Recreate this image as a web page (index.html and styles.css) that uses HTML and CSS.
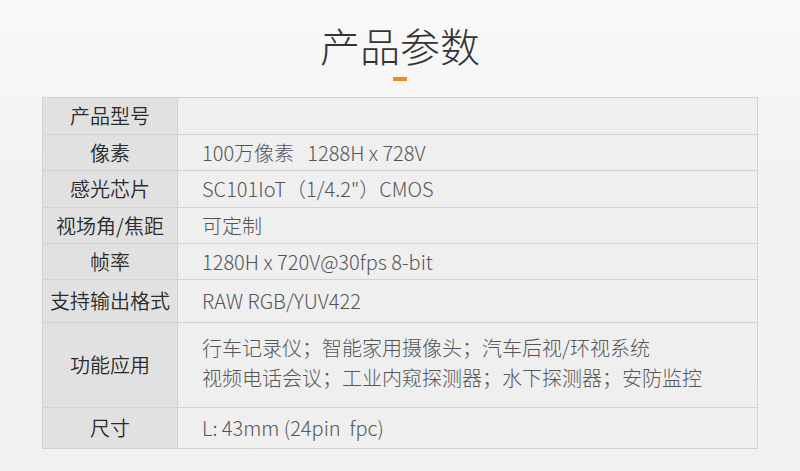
FILE: index.html
```html
<!DOCTYPE html>
<html lang="zh-CN">
  <head>
    <meta charset="UTF-8" />
    <meta name="viewport" content="width=device-width, initial-scale=1.0">
    <title>产品参数</title>
    <link rel="stylesheet" href="styles.css">
  </head>
  <body>
    <div class="main">
      <h2 class="title">产品参数</h2>
      <div class="bar"></div>

      <table class="params">
        <tr class="r1">
          <th>产品型号</th>
          <td></td>
        </tr>
        <tr class="r2">
          <th>像素</th>
          <td>100万像素&nbsp;&nbsp;&nbsp;1288H x 728V</td>
        </tr>
        <tr class="r3">
          <th>感光芯片</th>
          <td>SC101IoT（1/4.2"）CMOS</td>
        </tr>
        <tr class="r4">
          <th>视场角/焦距</th>
          <td>可定制</td>
        </tr>
        <tr class="r5">
          <th>帧率</th>
          <td>1280H x 720V@30fps 8-bit</td>
        </tr>
        <tr class="r6">
          <th>支持输出格式</th>
          <td>RAW RGB/YUV422</td>
        </tr>
        <tr class="r7">
          <th>功能应用</th>
          <td>行车记录仪；智能家用摄像头；汽车后视/环视系统<br />视频电话会议；工业内窥探测器；水下探测器；安防监控</td>
        </tr>
        <tr class="r8">
          <th>尺寸</th>
          <td>L: 43mm (24pin&nbsp;&nbsp;fpc)</td>
        </tr>
      </table>
    </div>
  </body>
</html>
```

FILE: styles.css
```css
body, html {
  margin: 0;
  height: 100%;
}

body {
  background: linear-gradient(to bottom, #f9f9f9 0%, #f2f2f2 40%, #f1f1f1 100%);
  font-family: "Noto Sans CJK SC", "Noto Sans", sans-serif;
  color: #333;
}

.main {
  padding-top: 25px;
  display: flex;
  flex-direction: column;
  align-items: center;
}

.title {
  margin: 0;
  font-size: 40px;
  line-height: 40px;
  font-weight: 300;
  color: #333;
}

.bar {
  width: 14px;
  height: 4px;
  margin-top: 12px;
  background: #f38a1d;
}

.params {
  margin-top: 16px;
  width: 716px;
  border-collapse: collapse;
  font-size: 20px;
}

.params th,
.params td {
  border: 1px solid #d2d2d2;
  padding: 0;
  line-height: 30px;
}

.params th {
  width: 134px;
  background: #e1e1e1;
  font-weight: 350;
  color: #2b2b2b;
  text-align: center;
}

.params td {
  background: #efefef;
  color: #555;
  font-weight: 300;
  text-align: left;
  padding-left: 24px;
}

.r1 { height: 37px; }
.r2 { height: 36px; }
.r3 { height: 37px; }
.r4 { height: 36px; }
.r5 { height: 36px; }
.r6 { height: 43px; }
.r7 { height: 85px; }
.r7 td { padding-bottom: 5px; }
.r8 { height: 41px; }
```
